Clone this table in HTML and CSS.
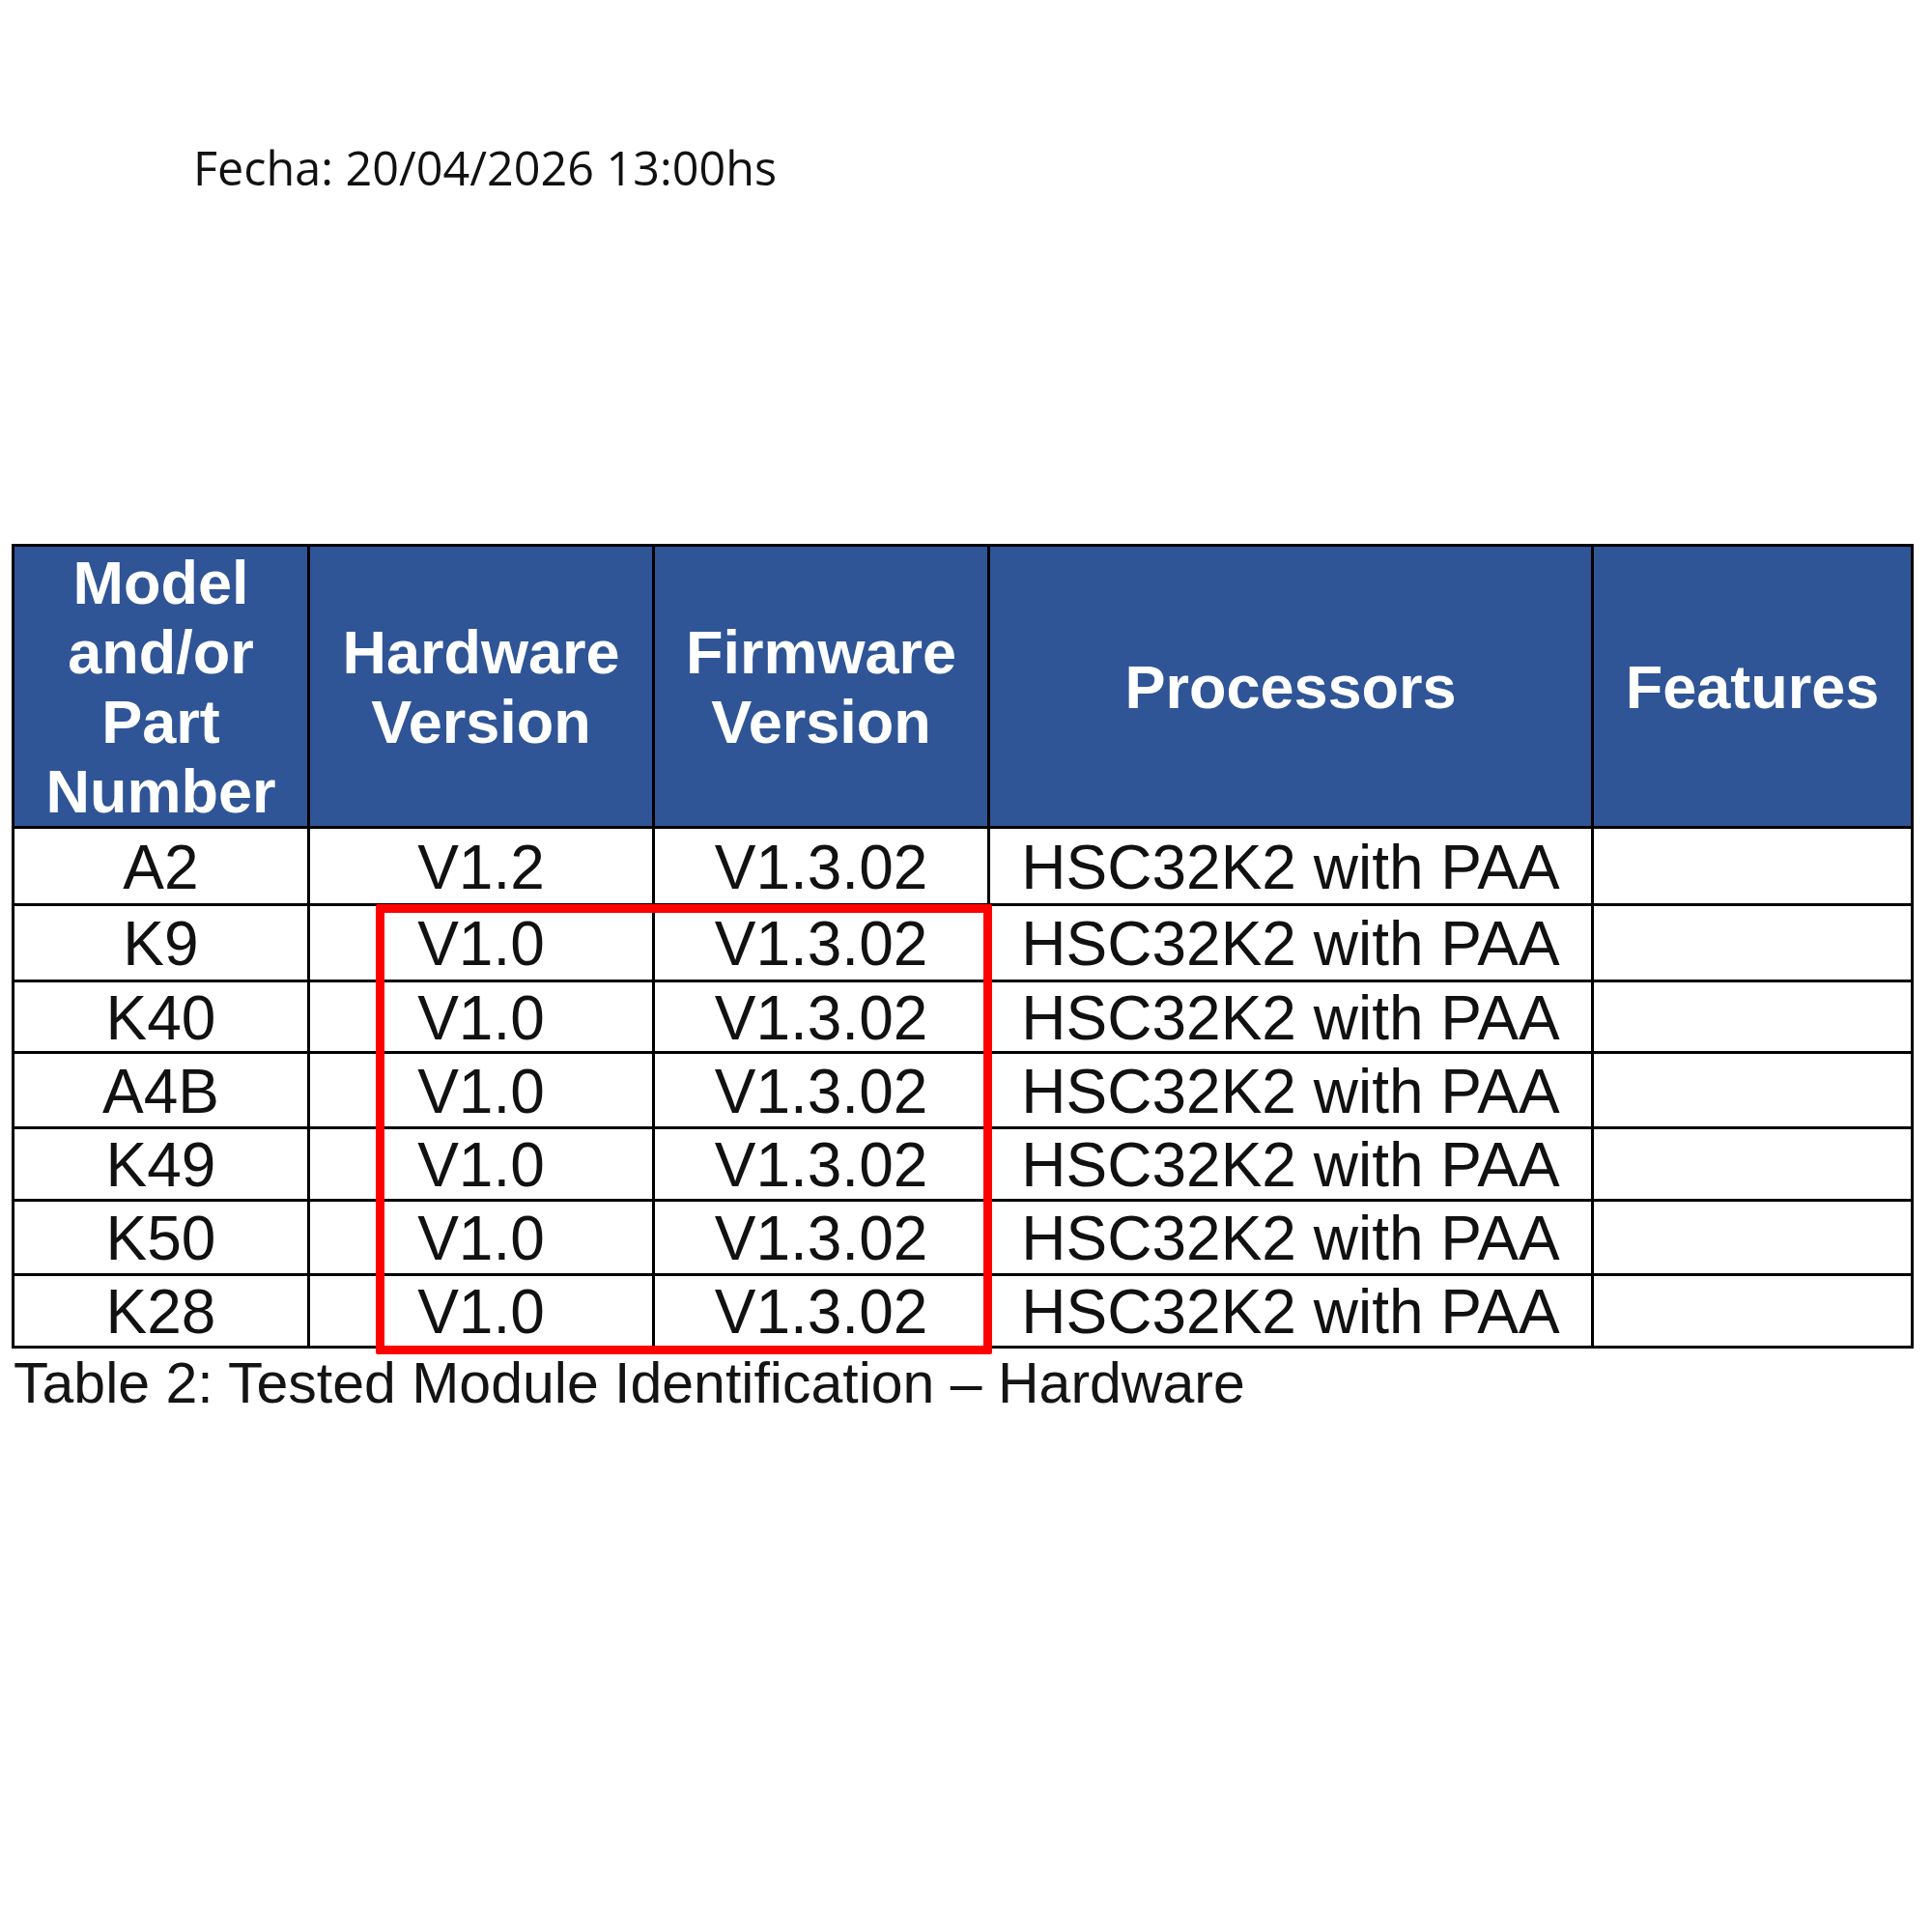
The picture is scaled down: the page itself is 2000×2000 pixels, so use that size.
FILE: index.html
```html
<!DOCTYPE html>
<html lang="es">
<head>
<meta charset="utf-8">
<title>Tested Module Identification</title>
<link rel="stylesheet" href="styles.css">
</head>
<body>
<div class="page">
  <div class="fecha">Fecha: 20/04/2026 13:00hs</div>
  <div class="table-wrap">
    <div class="grid">
      <div class="cell head">Model<br>and/or<br>Part<br>Number</div>
      <div class="cell head">Hardware<br>Version</div>
      <div class="cell head">Firmware<br>Version</div>
      <div class="cell head">Processors</div>
      <div class="cell head">Features</div>

      <div class="cell">A2</div>
      <div class="cell">V1.2</div>
      <div class="cell">V1.3.02</div>
      <div class="cell">HSC32K2 with PAA</div>
      <div class="cell"></div>

      <div class="cell">K9</div>
      <div class="cell">V1.0</div>
      <div class="cell">V1.3.02</div>
      <div class="cell">HSC32K2 with PAA</div>
      <div class="cell"></div>

      <div class="cell">K40</div>
      <div class="cell">V1.0</div>
      <div class="cell">V1.3.02</div>
      <div class="cell">HSC32K2 with PAA</div>
      <div class="cell"></div>

      <div class="cell">A4B</div>
      <div class="cell">V1.0</div>
      <div class="cell">V1.3.02</div>
      <div class="cell">HSC32K2 with PAA</div>
      <div class="cell"></div>

      <div class="cell">K49</div>
      <div class="cell">V1.0</div>
      <div class="cell">V1.3.02</div>
      <div class="cell">HSC32K2 with PAA</div>
      <div class="cell"></div>

      <div class="cell">K50</div>
      <div class="cell">V1.0</div>
      <div class="cell">V1.3.02</div>
      <div class="cell">HSC32K2 with PAA</div>
      <div class="cell"></div>

      <div class="cell">K28</div>
      <div class="cell">V1.0</div>
      <div class="cell">V1.3.02</div>
      <div class="cell">HSC32K2 with PAA</div>
      <div class="cell"></div>
    </div>
    <div class="highlight"></div>
  </div>
  <div class="caption">Table 2: Tested Module Identification – Hardware</div>
</div>
</body>
</html>
```

FILE: styles.css
```css
html, body {
  margin: 0;
  padding: 0;
  background: #ffffff;
}

.page {
  width: 2000px;
  min-height: 2000px;
}

.fecha {
  padding: 140px 0 0 200px;
  font-family: "Open Sans", "Noto Sans", sans-serif;
  font-size: 48.5px;
  line-height: 66px;
  color: #111111;
}

.table-wrap {
  position: relative;
  margin: 357px 0 0 12px;
  width: 1969px;
}

.grid {
  display: grid;
  grid-template-columns: 303px 354px 344px 622px 328px;
  grid-template-rows: 289px 77px 76px 71px 75px 72px 74px 72px;
  gap: 3px;
  padding: 3px;
  background: #000000;
  font-family: "Liberation Sans", Arial, sans-serif;
}

.cell {
  display: flex;
  align-items: center;
  justify-content: center;
  text-align: center;
  padding-top: 2px;
  background: #ffffff;
  color: #111111;
  font-size: 64px;
  line-height: 1;
  white-space: nowrap;
}

.cell.head {
  padding-top: 0;
  background: #2f5597;
  color: #ffffff;
  font-size: 63px;
  font-weight: bold;
  line-height: 72px;
}

.highlight {
  position: absolute;
  left: 377px;
  top: 373px;
  width: 638px;
  height: 466px;
  box-sizing: border-box;
  border: 9px solid #ff0000;
  border-radius: 2px;
}

.caption {
  margin: 3px 0 0 14px;
  font-family: "Liberation Sans", Arial, sans-serif;
  font-size: 59px;
  line-height: 66px;
  color: #141414;
}
```
